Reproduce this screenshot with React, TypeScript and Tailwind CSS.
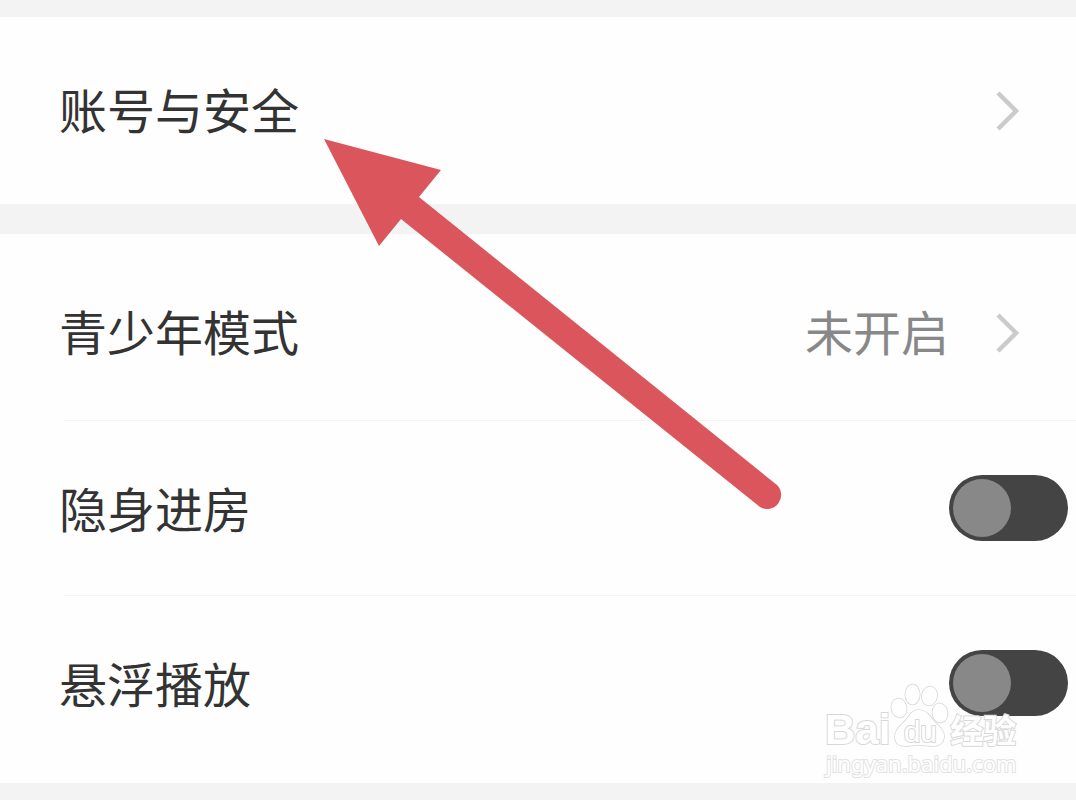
import { useState } from "react";

function Chevron() {
  return (
    <svg viewBox="0 0 26 42" className="h-[42px] w-[26px] shrink-0" fill="none" stroke="#cbcbcb" strokeWidth="4.5" aria-hidden="true">
      <path d="M4 3 L22 21 L4 39" />
    </svg>
  );
}

function LinkRow({ label, value }: { label: string; value?: string }) {
  return (
    <a href="#" className="flex h-[174px] items-center pr-14 pl-[59px]">
      <span className="flex-1 pb-[6px]">{label}</span>
      {value && <span className="mr-[45px] pb-[6px] text-[#888888]">{value}</span>}
      <Chevron />
    </a>
  );
}

function SwitchRow({ label }: { label: string }) {
  const [on, setOn] = useState(false);
  return (
    <label className="flex h-[174px] items-center justify-between pr-2 pl-[59px]">
      <span className="pb-[2px]">{label}</span>
      <input
        type="checkbox"
        role="switch"
        checked={on}
        onChange={(e) => setOn(e.target.checked)}
        className="flex h-[66px] w-[119px] shrink-0 appearance-none items-center rounded-full bg-[#444444] px-1 before:size-[58px] before:rounded-full before:bg-[#888888] before:content-[''] checked:justify-end"
      />
    </label>
  );
}

function Divider() {
  return <div className="ml-16 h-px bg-[#f3f3f3]" />;
}

function Pointer() {
  return (
    <svg viewBox="0 0 460 374" className="pointer-events-none absolute top-[138px] left-[323px] h-[374px] w-[460px]" aria-hidden="true">
      <path d="M1 1 L118 32 L96 59 L454 347 A14 14 0 0 1 437 369 L78 81 L56 108 Z" fill="#db565c" />
    </svg>
  );
}

function Watermark() {
  return (
    <div className="pointer-events-none absolute right-[55px] bottom-[22px] flex w-[196px] flex-col text-white [-webkit-text-stroke:2px_#d8d8d8] [paint-order:stroke_fill]">
      <div className="flex items-end">
        <span className="font-['Liberation_Sans',sans-serif] text-[42px] leading-[36px] font-bold">Bai</span>
        <div className="grid w-[60px] grid-cols-1 justify-items-center">
          <svg viewBox="65 0 60 66" className="col-start-1 row-start-1 h-[66px] w-[60px]" fill="white" stroke="#d6d6d6" strokeWidth="1.6" aria-hidden="true">
            <ellipse cx="74" cy="26" rx="7.5" ry="9.5" transform="rotate(-12 74 26)" />
            <ellipse cx="87.5" cy="12.500" rx="7.2" ry="10" />
            <ellipse cx="104.5" cy="14" rx="7.5" ry="9.5" transform="rotate(12 104.5 14)" />
            <ellipse cx="115" cy="31" rx="7.5" ry="9.5" transform="rotate(-8 115 31)" />
            <path d="M94 28 C87 28 84 34 81 38 C76 44 70 47 70 55 C70 61 74 64 80 64 C85 64 89 63 94 63 C99 63 103 64 108 64 C115 64 119 60 119 54 C119 47 112 43 108 38 C104 33 101 28 94 28 Z" />
          </svg>
          <span className="z-10 col-start-1 row-start-1 self-end font-['Liberation_Sans',sans-serif] text-[30px] leading-[32px]">du</span>
        </div>
        <span className="text-[33px] leading-[38px] font-bold whitespace-nowrap">经验</span>
      </div>
      <span className="pl-px font-['Noto_Sans',sans-serif] text-[22px] leading-[30px] [-webkit-text-stroke:2px_#e2e2e2]">jingyan.baidu.com</span>
    </div>
  );
}

export default function App() {
  return (
    <main className="min-h-screen bg-[#f3f3f3] font-['Noto_Sans_CJK_SC',sans-serif] text-[48px] leading-[72px] text-[#333333]">
      <div className="relative overflow-hidden py-[17px]">
        <section className="bg-[#fefefe] pt-[7px] pb-[6px]">
          <LinkRow label="账号与安全" />
        </section>
        <section className="mt-[30px] bg-[#fefefe] pt-3 pb-[13px]">
          <LinkRow label="青少年模式" value="未开启" />
          <Divider />
          <SwitchRow label="隐身进房" />
          <Divider />
          <SwitchRow label="悬浮播放" />
        </section>
        <Pointer />
        <Watermark />
      </div>
    </main>
  );
}
